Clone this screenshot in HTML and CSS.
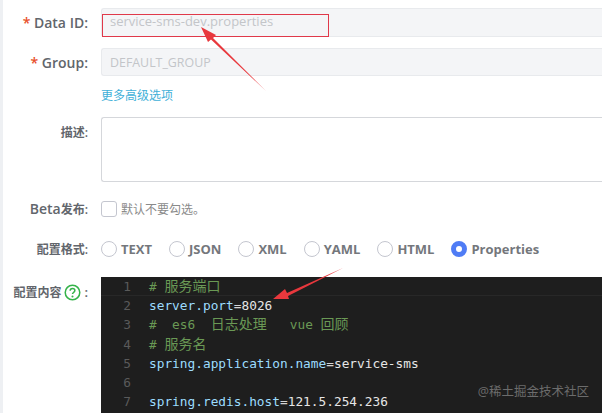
FILE: index.html
```html
<!DOCTYPE html>
<html lang="zh">
<head>
<meta charset="utf-8">
<title>配置</title>
<link rel="stylesheet" href="styles.css">
</head>
<body>
<div class="page">
  <form class="form">
    <div class="row row-id">
      <label class="label"><span class="req">*</span> Data ID:</label>
      <div class="input input-id">service-sms-dev.properties</div>
    </div>
    <div class="row row-group">
      <label class="label"><span class="req">*</span> Group:</label>
      <div class="input">DEFAULT_GROUP</div>
    </div>
    <div class="row row-more">
      <span></span>
      <a class="more">更多高级选项</a>
    </div>
    <div class="row row-desc">
      <label class="label label-zh">描述:</label>
      <div class="textarea"></div>
    </div>
    <div class="row row-beta">
      <label class="label">Beta<span class="label-zh">发布:</span></label>
      <div class="check"><span class="box"></span><span class="check-text">默认不要勾选。</span></div>
    </div>
    <div class="row row-format">
      <label class="label label-zh">配置格式:</label>
      <div class="radios">
        <span class="radio"><i class="dot"></i>TEXT</span>
        <span class="radio"><i class="dot"></i>JSON</span>
        <span class="radio"><i class="dot"></i>XML</span>
        <span class="radio"><i class="dot"></i>YAML</span>
        <span class="radio"><i class="dot"></i>HTML</span>
        <span class="radio"><i class="dot on"></i>Properties</span>
      </div>
    </div>
    <div class="row row-code">
      <label class="label label-zh label-code">配置内容
        <svg class="help" width="17" height="17" viewBox="0 0 18 18"><circle cx="9" cy="9" r="7.7" fill="none" stroke="#35b34a" stroke-width="1.6"/><path d="M6.500 7.100c0-1.500 1.100-2.400 2.500-2.400s2.500.9 2.500 2.200c0 2-2.500 1.800-2.500 3.800" fill="none" stroke="#35b34a" stroke-width="1.600"/><circle cx="9" cy="13.200" r="1.100" fill="#35b34a"/></svg>
        <span class="colon">:</span></label>
      <div class="editor">
        <div class="line current"><span class="no">1</span><span class="c"># <span class="zh">服务端口</span></span></div>
        <div class="line"><span class="no">2</span><span class="k">server.port</span><span class="e">=</span><span class="v">8026</span></div>
        <div class="line"><span class="no">3</span><span class="c">#  es6  <span class="zh">日志处理</span>   vue <span class="zh">回顾</span></span></div>
        <div class="line"><span class="no">4</span><span class="c"># <span class="zh">服务名</span></span></div>
        <div class="line"><span class="no">5</span><span class="k">spring.application.name</span><span class="e">=</span><span class="v">service-sms</span></div>
        <div class="line"><span class="no">6</span></div>
        <div class="line"><span class="no">7</span><span class="k">spring.redis.host</span><span class="e">=</span><span class="v">121.5.254.236</span></div>
      </div>
    </div>
  </form>
  <div class="redbox"></div>
  <svg class="arrows" width="602" height="413" viewBox="0 0 602 413">
    <path d="M266 91 L213 38 L216 35 L201 27 L208 42 L211 39.500 Z" fill="#e8383d"/>
    <path d="M343 268 L287 293 L285 289 L273 299 L289 299 L288 296 Z" fill="#e8383d"/>
  </svg>
  <div class="mark">@稀土掘金技术社区</div>
</div>
</body>
</html>
```
FILE: styles.css
```css
* { box-sizing: border-box; }
html, body { margin: 0; padding: 0; }
body {
  width: 602px;
  height: 413px;
  overflow: hidden;
  background: #fff;
  font-family: "Open Sans", "Noto Sans CJK SC", sans-serif;
  font-size: 13px;
  color: #666;
}
.page {
  position: relative;
  width: 602px;
  height: 413px;
  overflow: hidden;
  background: #fff;
  border-left: 3px solid #eef0f3;
}
.form { display: flex; flex-direction: column; }
.row {
  display: grid;
  grid-template-columns: 85px 1fr;
  column-gap: 13px;
  align-items: center;
}
.label {
  text-align: right;
  font-weight: 600;
  font-size: 14px;
  color: #62666c;
  white-space: nowrap;
}
.label-zh { font-size: 12px; }
.req { color: #e8502a; }
.row-id { margin-top: 8px; height: 29px; }
.row-group { margin-top: 11px; height: 28px; }
.row-more { margin-top: 9px; height: 20px; }
.row-desc { margin-top: 12px; height: 65px; align-items: start; }
.row-desc .label { padding-top: 6px; }
.row-beta { margin-top: 17px; height: 18px; }
.row-format { margin-top: 23px; height: 18px; }
.row-code { margin-top: 19px; height: 136px; align-items: start; }
.input {
  height: 100%;
  background: #f4f5f7;
  border: 1px solid #e8eaed;
  border-radius: 3px 0 0 3px;
  border-right: 0;
  padding-left: 8px;
  display: flex;
  align-items: center;
  font-size: 12.400px;
  color: #c3c5c9;
}
.input-id { font-size: 13px; padding-bottom: 3px; }
.more { color: #3fb0d8; font-size: 12px; }
.textarea {
  height: 100%;
  border: 1px solid #d5d7db;
  border-right: 0;
  border-radius: 3px 0 0 3px;
}
.check { display: flex; align-items: center; gap: 4px; }
.box {
  width: 16px;
  height: 16px;
  border: 1px solid #c4c6cf;
  border-radius: 3px;
  flex: none;
}
.check-text { font-size: 12px; color: #8a8a8a; }
.radios { display: flex; gap: 17px; align-items: center; }
.radio {
  display: flex;
  align-items: center;
  gap: 4px;
  font-weight: 700;
  font-size: 13px;
  color: #74777c;
}
.dot {
  width: 16px;
  height: 16px;
  border: 1px solid #c4c6cf;
  border-radius: 50%;
  display: block;
  flex: none;
}
.dot.on { border: 5.500px solid #4f7cf5; background: #fff; }
.label-code {
  display: flex;
  justify-content: flex-end;
  align-items: center;
  gap: 3px;
  padding-top: 6px;
  color: #62666c;
}
.help { flex: none; }
.colon { font-size: 13px; }
.editor {
  height: 136px;
  background: #1e1e1e;
  font-family: "DejaVu Sans Mono", "Noto Sans CJK SC", monospace;
  font-size: 12.800px;
}
.zh { font-size: 14px; }
.line {
  display: flex;
  height: 19.200px;
  line-height: 19.200px;
  white-space: pre;
}
.line.current {
  border-bottom: 1px solid #282828;
}
.no {
  width: 37px;
  padding-right: 7px;
  text-align: right;
  color: #5a5a5a;
  margin-right: 11px;
  flex: none;
}
.c { color: #6a9955; }
.k { color: #9cdcfe; }
.e { color: #d4d4d4; }
.v { color: #e6e6e6; }
.redbox {
  position: absolute;
  left: 99px;
  top: 14px;
  width: 227px;
  height: 23px;
  border: 1px solid #e0394a;
}
.arrows { position: absolute; left: -3px; top: 0; pointer-events: none; }
.mark {
  position: absolute;
  right: 13px;
  top: 381px;
  font-size: 12.500px;
  color: #6c6c6c;
}
```
